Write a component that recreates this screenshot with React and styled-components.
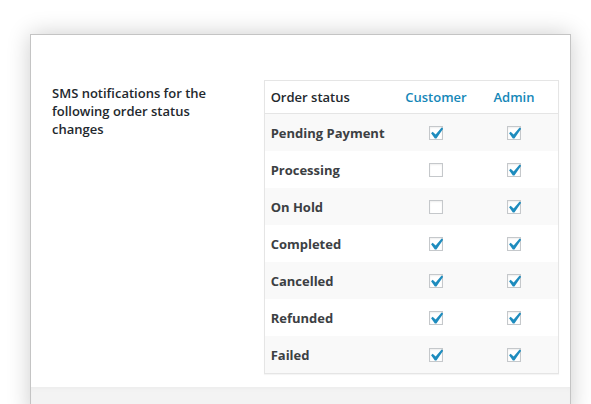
import React from "react";
import styled, { createGlobalStyle } from "styled-components";

const GlobalStyle = createGlobalStyle`
  html, body {
    margin: 0;
    padding: 0;
    background: #fff;
    overflow: hidden;
  }
  body {
    font-family: "Open Sans", "Liberation Sans", sans-serif;
    -webkit-font-smoothing: antialiased;
  }
`;

const statuses = [
  { name: "Pending Payment", customer: true, admin: true },
  { name: "Processing", customer: false, admin: true },
  { name: "On Hold", customer: false, admin: true },
  { name: "Completed", customer: true, admin: true },
  { name: "Cancelled", customer: true, admin: true },
  { name: "Refunded", customer: true, admin: true },
  { name: "Failed", customer: true, admin: true },
];

const Checkbox = ({ checked }) => (
  <Box>
    {checked && (
      <svg width="14" height="14" viewBox="4 3.5 12 12">
        <path
          d="M14.83 4.89l1.34.94-5.81 8.38H9.02L5.78 9.67l1.34-1.25 2.57 2.4z"
          fill="#1e8cbe"
        />
      </svg>
    )}
  </Box>
);

const App = () => {
  return (
    <>
      <GlobalStyle />
      <Page>
        <Card>
          <CardBody>
            <FieldLabel>SMS notifications for the following order status changes</FieldLabel>
            <StatusTable>
              <HeadRow>
                <HeadCell>Order status</HeadCell>
                <RoleCell>Customer</RoleCell>
                <RoleCell>Admin</RoleCell>
              </HeadRow>
              {statuses.map((s, i) => (
                <Row key={s.name} $alt={i % 2 === 0}>
                  <StatusName>{s.name}</StatusName>
                  <CheckCell>
                    <Checkbox checked={s.customer} />
                  </CheckCell>
                  <CheckCell>
                    <Checkbox checked={s.admin} />
                  </CheckCell>
                </Row>
              ))}
            </StatusTable>
          </CardBody>
          <CardFooter />
        </Card>
      </Page>
    </>
  );
};

const Page = styled.div`
  padding: 34px 20px 0 30px;
  height: 404px;
  box-sizing: border-box;
`;

const Card = styled.div`
  width: 541px;
  box-sizing: border-box;
  border: 1px solid #c4c4c4;
  border-bottom: none;
  background: #fff;
  box-shadow: 0 0 22px rgba(0, 0, 0, 0.2);
`;

const CardBody = styled.div`
  display: flex;
  align-items: flex-start;
  padding: 45px 11px 13px 21px;
`;

const FieldLabel = styled.div`
  width: 160px;
  margin-right: 52px;
  margin-top: 4px;
  font-size: 13px;
  line-height: 18px;
  font-weight: 600;
  color: #23282d;
`;

const StatusTable = styled.div`
  width: 296px;
  box-sizing: border-box;
  border: 1px solid #e5e5e5;
  box-shadow: 0 1px 1px rgba(0, 0, 0, 0.04);
`;

const Grid = styled.div`
  display: grid;
  grid-template-columns: 1fr 78px 78px;
  padding-right: 5px;
  align-items: center;
`;

const HeadRow = styled(Grid)`
  height: 32px;
  border-bottom: 1px solid #e5e5e5;
  background: #fff;
`;

const HeadCell = styled.div`
  padding-left: 6px;
  font-size: 13px;
  font-weight: 600;
  color: #23282d;
`;

const RoleCell = styled.div`
  text-align: center;
  font-size: 13px;
  font-weight: 600;
  color: #1587b8;
`;

const Row = styled(Grid)`
  height: 37px;
  background: ${(p) => (p.$alt ? "#f9f9f9" : "#fff")};
`;

const StatusName = styled.div`
  padding-left: 6px;
  font-size: 13px;
  font-weight: 700;
  color: #3c4043;
`;

const CheckCell = styled.div`
  display: flex;
  justify-content: center;
`;

const Box = styled.span`
  width: 14px;
  height: 14px;
  box-sizing: border-box;
  border: 1px solid #c5c8cb;
  background: #fff;
  box-shadow: inset 0 1px 2px rgba(0, 0, 0, 0.07);
  display: flex;
  align-items: center;
  justify-content: center;

  svg {
    flex: none;
  }
`;

const CardFooter = styled.div`
  height: 30px;
  background: #f3f3f3;
  box-shadow: inset 0 4px 6px -4px rgba(0, 0, 0, 0.05);
`;

export default App;
